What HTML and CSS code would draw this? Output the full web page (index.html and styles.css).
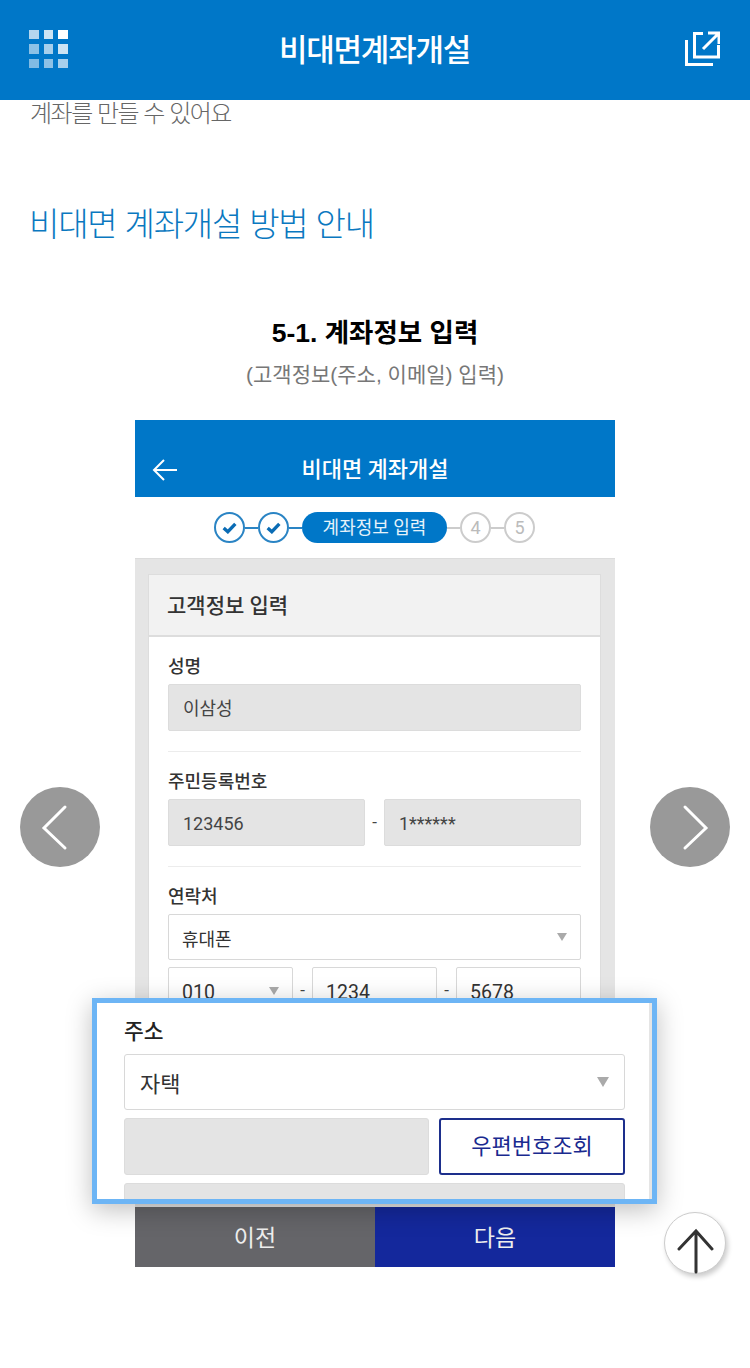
FILE: index.html
```html
<!DOCTYPE html>
<html lang="ko">
  <head>
    <title>비대면계좌개설</title>
    <meta name="viewport" content="width=device-width, initial-scale=1.0" />
    <link rel="stylesheet" href="styles.css">
  </head>
  <body>
    <header class="topbar">
      <div class="grid-icon">
        <i class="o70"></i><i class="o80"></i><i class="o100"></i>
        <i class="o55"></i><i class="o65"></i><i class="o80"></i>
        <i class="o50"></i><i class="o55"></i><i class="o65"></i>
      </div>
      <h1 class="topbar-title">비대면계좌개설</h1>
      <svg class="share-icon" width="36" height="36" viewBox="0 0 36 36" fill="none" stroke="#fff" stroke-width="3">
        <path d="M2.500 10V34.500H29" />
        <path d="M19 3.500H10.500V27H34.500V15" />
        <path d="M19 19L34 4M24 3H35V14" />
      </svg>
    </header>

    <main class="content">
      <p class="intro">계좌를 만들 수 있어요</p>
      <h2 class="guide-title">비대면 계좌개설 방법 안내</h2>
      <h3 class="step-title">5-1. 계좌정보 입력</h3>
      <p class="step-sub">(고객정보(주소, 이메일) 입력)</p>

      <div class="slider">
        <div class="nav-btn nav-prev">
          <svg width="80" height="80" viewBox="0 0 80 80" fill="none" stroke="#fff" stroke-width="3" stroke-linecap="round">
            <path d="M45 20L24 41L45 61" />
          </svg>
        </div>
        <div class="nav-btn nav-next">
          <svg width="80" height="80" viewBox="0 0 80 80" fill="none" stroke="#fff" stroke-width="3" stroke-linecap="round">
            <path d="M35 20L56 41L35 61" />
          </svg>
        </div>

        <div class="phone">
          <div class="phone-head">
            <svg class="back-icon" width="26" height="24" viewBox="0 0 26 24" fill="none" stroke="#fff" stroke-width="2">
              <path d="M25 12H2M12 2L2 12L12 22" />
            </svg>
            <div class="phone-title">비대면 계좌개설</div>
          </div>

          <div class="steps">
            <span class="dot done"><svg width="15" height="12" viewBox="0 0 18 14" fill="none" stroke="#0a6cb5" stroke-width="4"><path d="M2 7L7 11.500L16 2" /></svg></span>
            <span class="link done"></span>
            <span class="dot done"><svg width="15" height="12" viewBox="0 0 18 14" fill="none" stroke="#0a6cb5" stroke-width="4"><path d="M2 7L7 11.500L16 2" /></svg></span>
            <span class="link done"></span>
            <span class="pill">계좌정보 입력</span>
            <span class="link"></span>
            <span class="dot">4</span>
            <span class="link"></span>
            <span class="dot">5</span>
          </div>

          <div class="panel">
            <div class="card">
              <div class="card-head">고객정보 입력</div>
              <div class="card-body">
                <div class="label">성명</div>
                <div class="input">이삼성</div>
                <div class="divider"></div>
                <div class="label">주민등록번호</div>
                <div class="row">
                  <div class="input grow">123456</div>
                  <span class="dash wide">-</span>
                  <div class="input grow">1******</div>
                </div>
                <div class="divider"></div>
                <div class="label">연락처</div>
                <div class="select">휴대폰<span class="caret"></span></div>
                <div class="row phone-row">
                  <div class="select grow">010<span class="caret"></span></div>
                  <span class="dash wide">-</span>
                  <div class="select grow">1234</div>
                  <span class="dash wide">-</span>
                  <div class="select grow">5678</div>
                </div>
              </div>
            </div>
          </div>

          <div class="phone-foot">
            <div class="foot-btn prev">이전</div>
            <div class="foot-btn next">다음</div>
          </div>

          <div class="highlight">
            <div class="hl-inner">
              <div class="hl-label">주소</div>
              <div class="hl-select">자택<span class="caret big"></span></div>
              <div class="hl-row">
                <div class="hl-box hl-zip"></div>
                <div class="hl-btn">우편번호조회</div>
              </div>
              <div class="hl-box hl-addr"></div>
            </div>
          </div>
        </div>

        <div class="top-btn">
          <svg width="62" height="62" viewBox="0 0 62 62" fill="none" stroke="#333" stroke-width="3" stroke-linecap="round">
            <path d="M32 19V60M15 37L32 19L48 37" />
          </svg>
        </div>
      </div>
    </main>
  </body>
</html>
```

FILE: styles.css
```css
* {
  box-sizing: border-box;
}
html, body {
  margin: 0;
  height: 1368px;
  overflow: hidden;
}
body {
  background: white;
  color: #333;
  font-family: "Noto Sans CJK KR", sans-serif;
}
h1, h2, h3, p {
  margin: 0;
}

.topbar {
  position: relative;
  z-index: 5;
  height: 100px;
  background: #0077c8;
  display: grid;
  grid-template-columns: 1fr auto 1fr;
  align-items: center;
  padding: 0 30px 4px 29px;
}
.grid-icon {
  margin-top: 2px;
  width: 39px;
  display: grid;
  grid-template-columns: repeat(3, 9.500px);
  grid-auto-rows: 9.500px;
  gap: 5px;
}
.grid-icon i {
  background: white;
}
.o50 { opacity: 0.5; }
.o55 { opacity: 0.55; }
.o65 { opacity: 0.65; }
.o70 { opacity: 0.7; }
.o80 { opacity: 0.8; }
.topbar-title {
  color: white;
  font-size: 31px;
  font-weight: 500;
  letter-spacing: -1.200px;
  line-height: 40px;
}
.share-icon {
  justify-self: end;
}

.intro {
  font-size: 24px;
  font-weight: 300;
  line-height: 24px;
  letter-spacing: -1.500px;
  color: #666;
  padding-left: 30px;
}
.guide-title {
  margin-top: 73px;
  padding-left: 29px;
  font-size: 33px;
  font-weight: 300;
  line-height: 50px;
  letter-spacing: -1.200px;
  color: #0a78c0;
}
.step-title {
  margin-top: 66px;
  text-align: center;
  font-family: "Liberation Sans", "Noto Sans CJK KR", sans-serif;
  font-size: 26.500px;
  font-weight: 700;
  line-height: 40px;
  color: #000;
}
.step-sub {
  margin-top: 7px;
  text-align: center;
  font-family: "Liberation Sans", "Noto Sans CJK KR", sans-serif;
  font-size: 21px;
  font-weight: 400;
  line-height: 30px;
  color: #777;
}

.slider {
  position: relative;
  margin-top: 30px;
}
.nav-btn {
  position: absolute;
  top: 367px;
  width: 80px;
  height: 80px;
  border-radius: 50%;
  background: #999;
}
.nav-prev {
  left: 20px;
}
.nav-next {
  right: 20px;
}
.top-btn {
  position: absolute;
  top: 792px;
  left: 664px;
  width: 62px;
  height: 62px;
  border-radius: 50%;
  background: white;
  border: 1px solid #ccc;
  box-shadow: 2px 3px 5px rgba(0, 0, 0, 0.2);
}
.top-btn svg {
  display: block;
  margin: -1px;
}

.phone {
  position: relative;
  width: 480px;
  margin: 0 auto;
  font-family: Roboto, "Noto Sans CJK KR", sans-serif;
}
.phone-head {
  height: 77px;
  background: #0077c8;
  display: grid;
  grid-template-columns: 1fr auto 1fr;
  align-items: center;
  padding: 30px 17px 0;
}
.phone-title {
  color: white;
  font-size: 22px;
  font-weight: 500;
  line-height: 40px;
  margin-top: -7px;
}
.back-icon {
  margin-top: -7px;
}

.steps {
  height: 61px;
  display: flex;
  align-items: center;
  justify-content: center;
  padding-right: 1px;
}
.dot {
  width: 31px;
  height: 31px;
  border: 2px solid #ccc;
  border-radius: 50%;
  display: flex;
  align-items: center;
  justify-content: center;
  color: #bbb;
  font-size: 18px;
}
.dot.done {
  border-color: #2a84c4;
}
.link {
  width: 13px;
  height: 2px;
  background: #ccc;
}
.link.done {
  background: #2a84c4;
}
.pill {
  width: 145px;
  height: 31px;
  border-radius: 16px;
  background: #0077c8;
  color: #e6f2fa;
  font-size: 18px;
  line-height: 31px;
  text-align: center;
}

.panel {
  height: 649px;
  overflow: hidden;
  background: #e5e5e5;
  border-top: 1px solid #dcdcdc;
  padding: 15px 14px 0 13px;
}
.card {
  background: white;
  border: 1px solid #ddd;
}
.card-head {
  height: 62px;
  background: #f2f2f2;
  border-bottom: 2px solid #ddd;
  padding-left: 18px;
  font-size: 21px;
  font-weight: 500;
  line-height: 63px;
  color: #333;
}
.card-body {
  padding: 15px 19px 0;
}
.label {
  font-size: 18px;
  font-weight: 500;
  line-height: 29px;
  height: 28px;
  margin-bottom: 4px;
  color: #333;
}
.input {
  height: 47px;
  background: #e4e4e4;
  border: 1px solid #dcdcdc;
  border-radius: 2px;
  padding-left: 14px;
  font-size: 18px;
  line-height: 47px;
  color: #444;
}
.divider {
  height: 1px;
  background: #ececec;
  margin: 20px 0 15px;
}
.row {
  display: flex;
}
.grow {
  flex: 1;
}
.dash {
  text-align: center;
  font-size: 17px;
  line-height: 46px;
  color: #444;
}
.wide {
  width: 19px;
}
.select {
  height: 46px;
  background: white;
  border: 1px solid #d8d8d8;
  border-radius: 2px;
  padding: 2px 13px 0;
  font-size: 18px;
  color: #333;
  display: flex;
  align-items: center;
  justify-content: space-between;
}
.phone-row {
  margin-top: 7px;
}
.phone-row .select {
  height: 46px;
  padding-top: 4px;
  font-size: 19.500px;
}
.caret {
  width: 0;
  height: 0;
  margin-top: -3px;
  border-left: 5px solid transparent;
  border-right: 5px solid transparent;
  border-top: 8px solid #aaa;
}
.caret.big {
  margin-top: 0;
  border-left-width: 6px;
  border-right-width: 6px;
  border-top-width: 10px;
}

.phone-foot {
  display: flex;
  height: 60px;
}
.foot-btn {
  flex: 1;
  color: #eee;
  font-size: 23px;
  line-height: 63px;
  text-align: center;
}
.foot-btn.prev {
  background: #656569;
}
.foot-btn.next {
  background: #14289c;
}

.highlight {
  position: absolute;
  top: 578px;
  left: -43px;
  width: 565px;
  height: 206px;
  border: 5px solid #6db5f5;
  background: white;
  box-shadow: 0 6px 24px rgba(0, 0, 0, 0.25);
}
.hl-inner {
  height: 100%;
  overflow: hidden;
  border-right: 3px solid #e5e5e5;
  padding: 14px 24px 0 27px;
}
.hl-label {
  font-size: 21.500px;
  font-weight: 500;
  line-height: 30px;
  height: 28px;
  margin-bottom: 9px;
  color: #222;
}
.hl-select {
  height: 56px;
  border: 1px solid #d8d8d8;
  border-radius: 3px;
  padding: 0 15px;
  font-size: 22px;
  color: #333;
  display: flex;
  align-items: center;
  justify-content: space-between;
}
.hl-row {
  display: flex;
  gap: 10px;
  margin-top: 8px;
}
.hl-box {
  background: #e4e4e4;
  border: 1px solid #dcdcdc;
  border-radius: 3px;
}
.hl-zip {
  width: 305px;
  height: 57px;
}
.hl-btn {
  flex: 1;
  height: 57px;
  border: 2px solid #1d2f8c;
  border-radius: 3px;
  font-size: 22px;
  line-height: 54px;
  text-align: center;
  color: #1a2a8f;
}
.hl-addr {
  height: 57px;
  margin-top: 8px;
}
```
